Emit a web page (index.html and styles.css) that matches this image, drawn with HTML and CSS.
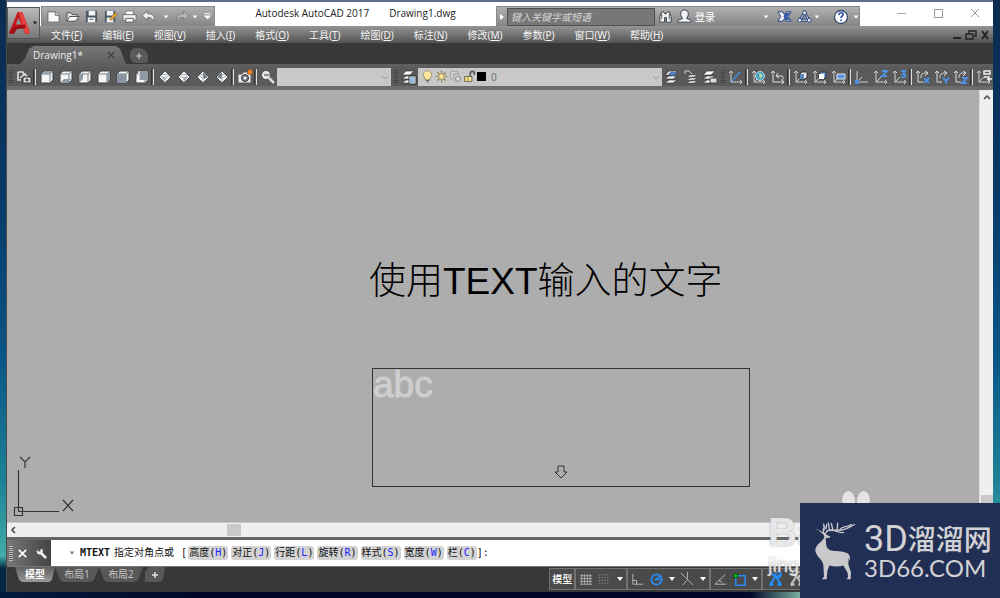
FILE: index.html
```html
<!DOCTYPE html>
<html lang="zh-CN">
<head>
<meta charset="utf-8">
<title>Autodesk AutoCAD 2017 - Drawing1.dwg</title>
<link rel="stylesheet" href="styles.css">
</head>
<body>
<svg class="defs" aria-hidden="true">
  <symbol id="cube" viewBox="0 0 16 16"><path d="M2 5l3-3h9v9l-3 3H2z" fill="#f4f4f4" stroke="#3c4248"/><path d="M2 5h9v9M11 5l3-3" fill="none" stroke="#737c86"/></symbol>
  <symbol id="diamond" viewBox="0 0 16 16"><path d="M8 2l6 6-6 6-6-6z" fill="#f6f6f6" stroke="#454c55"/><path d="M4 7l4 2 4-2M8 9v5M5 5l3 1 3-1" fill="none" stroke="#8a929a" stroke-width=".8"/></symbol>
  <symbol id="layers" viewBox="0 0 16 16"><path d="M1 6l4-4h8l-4 4zM1 10l4-3h8l-4 3zM1 14l4-3h8l-4 3z" fill="#fafafa" stroke="#333" stroke-width=".7"/></symbol>
  <symbol id="axes" viewBox="0 0 16 16"><path d="M3 2v11h11M1 4l2-2 2 2M12 11l2 2-2 2M3 13l5-5" fill="none" stroke="#cfcfcf"/></symbol>
  <symbol id="tri" viewBox="0 0 8 8"><path d="M1 2h6L4 6z" fill="currentColor"/></symbol>
  <symbol id="person" viewBox="0 0 18 18"><path d="M3 15l5-8M15 15L9 5M4 2l6 5 5-4M3 15l4-1M15 15l-4-1" fill="none" stroke="currentColor" stroke-width="2.4"/><circle cx="12" cy="4" r="3" fill="none" stroke="currentColor" stroke-width="1.3"/></symbol>
</svg>

<div class="window">
  <header class="header">
    <button class="app-button" aria-label="应用程序菜单">
      <svg class="app-logo" viewBox="0 0 24 28"><path d="M1 24L10 2h5l8 22-5 1-2-6H9l-3 6z" fill="#c5161d"/><path d="M11 2h4l8 22-5 1z" fill="#e64242"/><path d="M11 8l-3 7h6z" fill="#8d8d8d"/><path d="M1 24l6-7 11-2v4l-9 1-3 5z" fill="#9d0f15"/></svg>
      <svg class="tri"><use href="#tri"/></svg>
    </button>
    <div class="titlebar">
      <div class="quick">
        <button aria-label="新建"><svg viewBox="0 0 16 16"><path d="M2 3h8l4 4v7H2z" fill="#f8f8f8" stroke="#666"/><path d="M10 3v4h4" fill="#ccc" stroke="#777"/></svg></button>
        <button aria-label="打开"><svg viewBox="0 0 16 16"><path d="M2 13V4h4l2 2h5v3" fill="#e2e2e2" stroke="#454b52"/><path d="M2 13l3-5h10l-4 5z" fill="#fafafa" stroke="#454b52"/></svg></button>
        <button aria-label="保存"><svg viewBox="0 0 16 16"><path d="M2 2h12v12H2z" fill="#4d5866"/><path d="M5 2h7v5H5zM4 9h8v5H4z" fill="#f4f4f4"/><path d="M6 11h4" stroke="#555"/></svg></button>
        <button aria-label="另存为"><svg viewBox="0 0 16 16"><path d="M2 2h11v12H2z" fill="#4d5866"/><path d="M4 2h7v5H4zM4 9h7v5H4z" fill="#f4f4f4"/><path d="M7 11l6-7 2 2-6 6z" fill="#f0ad36" stroke="#72511f" stroke-width=".6"/></svg></button>
        <button aria-label="打印"><svg viewBox="0 0 16 16"><path d="M4 2h8v5H4z" fill="#fff" stroke="#777"/><path d="M1 6h14v6H1z" fill="#edf0f2" stroke="#6a6e73"/><path d="M4 10h8v4H4z" fill="#fff" stroke="#555"/></svg></button>
        <button aria-label="放弃"><svg viewBox="0 0 16 16"><path d="M1 7l6-5v3c5 0 8 2 7 8-2-3-3-4-7-4v3z" fill="#ededed" stroke="#5b6066" stroke-width=".8"/></svg></button>
        <svg class="tri small undo-list"><use href="#tri"/></svg>
        <button aria-label="重做"><svg viewBox="0 0 16 16"><path d="M15 7L9 2v3c-5 0-8 2-7 8 2-3 3-4 7-4v3z" fill="#b5b5b5" stroke="#737373" stroke-width=".8"/></svg></button>
        <svg class="tri small"><use href="#tri"/></svg>
        <button aria-label="自定义"><svg viewBox="0 0 16 16"><path d="M5 5h6" stroke="#fff"/><path d="M4 7h8l-4 4z" fill="#fff"/></svg></button>
      </div>
      <h1 class="title"><span>Autodesk AutoCAD 2017</span><span>Drawing1.dwg</span></h1>
      <div class="info">
        <svg class="tri side" viewBox="0 0 8 8"><path d="M2 1l4 3-4 3z" fill="#fff"/></svg>
        <input class="search" type="text" placeholder="键入关键字或短语" aria-label="键入关键字或短语">
        <button aria-label="搜索"><svg viewBox="0 0 16 16"><path d="M2 14V8l2-5h2l1 2h2l1-2h2l2 5v6h-5V9H7v5z" fill="#f3f3f3" stroke="#343b44"/><path d="M4 5v6M12 5v6" stroke="#454c55"/></svg></button>
        <button class="login"><svg viewBox="0 0 16 16"><path d="M8 1c5 0 5 6 2 9l5 2v2H1v-2l5-2C3 7 3 1 8 1z" fill="#f4f4f4" stroke="#39414d"/></svg><span>登录</span></button>
        <svg class="tri small push"><use href="#tri"/></svg>
        <button aria-label="Exchange"><svg viewBox="0 0 16 16"><path d="M1 3h5l2 3 2-3h5l-3 5 3 5h-5l-2-3-2 3H1l3-5z" fill="#e9edf6" stroke="#233e78"/><path d="M9 4h5l-3 4 3 4H9L7 8z" fill="#345ba8"/></svg></button>
        <button aria-label="A360"><svg viewBox="0 0 16 16"><path d="M8 4L3 12h10z" fill="none" stroke="#2c487b" stroke-width="3"/><path d="M8 4L3 12h10z" fill="none" stroke="#e0e8f5"/><g fill="#edf2fa" stroke="#2c487b"><circle cx="8" cy="4" r="2"/><circle cx="3" cy="12" r="2"/><circle cx="13" cy="12" r="2"/></g></svg></button>
        <svg class="tri small"><use href="#tri"/></svg>
        <button class="help" aria-label="帮助"><svg viewBox="0 0 16 16"><circle cx="8" cy="8" r="6.5" fill="#fff" stroke="#37496a" stroke-width="1.3"/><path d="M6 6c0-3 5-3 4 0-.3 1-2 1-2 3M8 10.500v1.500" fill="none" stroke="#2450a8" stroke-width="1.7"/></svg></button>
        <svg class="tri small"><use href="#tri"/></svg>
      </div>
      <div class="controls">
        <button aria-label="最小化"><svg viewBox="0 0 12 12"><path d="M2 5.500h9" stroke="#aaa"/></svg></button>
        <button aria-label="最大化"><svg viewBox="0 0 12 12"><path d="M2.500 1.500h8v8h-8z" fill="none" stroke="#999"/></svg></button>
        <button aria-label="关闭"><svg viewBox="0 0 12 12"><path d="M2 1l8 8M10 1l-8 8" stroke="#999"/></svg></button>
      </div>
    </div>
    <nav class="menubar">
      <button>文件(<u>F</u>)</button><button>编辑(<u>E</u>)</button><button>视图(<u>V</u>)</button><button>插入(<u>I</u>)</button><button>格式(<u>O</u>)</button><button>工具(<u>T</u>)</button><button>绘图(<u>D</u>)</button><button>标注(<u>N</u>)</button><button>修改(<u>M</u>)</button><button>参数(<u>P</u>)</button><button>窗口(<u>W</u>)</button><button>帮助(<u>H</u>)</button>
      <div class="doc-controls">
        <button aria-label="最小化图形"><svg viewBox="0 0 12 12"><path d="M2 9h8" stroke="#222" stroke-width="2"/></svg></button>
        <button aria-label="还原图形"><svg viewBox="0 0 12 12"><path d="M4 4V2h7v5H9M1 5h7v5H1z" fill="none" stroke="#222" stroke-width="1.400"/></svg></button>
        <button aria-label="关闭图形"><svg viewBox="0 0 12 12"><path d="M3 2l6 8M9 2l-6 8" stroke="#222" stroke-width="2"/></svg></button>
      </div>
    </nav>
  </header>

  <div class="file-tabs">
    <div class="file-tab"><span>Drawing1*</span><button aria-label="关闭选项卡"><svg viewBox="0 0 8 8"><path d="M1 1l6 6M7 1L1 7" stroke="#454545" stroke-width="1.500"/></svg></button></div>
    <button class="new-tab" aria-label="新图形"><svg viewBox="0 0 8 8"><path d="M4 1v6M1 4h6" stroke="#ccc" stroke-width="1.200"/></svg></button>
  </div>

  <div class="toolbar">
    <i class="grip"></i>
    <button class="tool" aria-label="命名视图"><svg viewBox="0 0 16 16"><path d="M2 3h5l1 4M2 3v8h3M4 9l5-4 3 4" fill="none" stroke="#ddd" stroke-width="1.600"/><path d="M7 8h8v6H7z" fill="#ddd" stroke="#333"/><circle cx="11" cy="11" r="1.500" fill="#444"/></svg></button>
    <i class="sep"></i>
    <button class="tool" aria-label="俯视"><svg viewBox="0 0 16 16"><use href="#cube"/><path d="M3 5l2-2h8l-2 2z" fill="#9aa4ae"/></svg></button>
    <button class="tool" aria-label="仰视"><svg viewBox="0 0 16 16"><use href="#cube"/><path d="M3 13l3-3h7l-2 3z" fill="#8f9aa6"/></svg></button>
    <button class="tool" aria-label="左视"><svg viewBox="0 0 16 16"><use href="#cube"/><path d="M3 6l3-3v7l-3 3z" fill="#8f9aa6"/></svg></button>
    <button class="tool" aria-label="右视"><svg viewBox="0 0 16 16"><use href="#cube"/><path d="M11 5l3-3v9l-3 3z" fill="#8f9aa6"/></svg></button>
    <button class="tool" aria-label="前视"><svg viewBox="0 0 16 16"><use href="#cube"/><path d="M2 5h9v9H2z" fill="#8995a3"/></svg></button>
    <button class="tool" aria-label="后视"><svg viewBox="0 0 16 16"><use href="#cube"/><path d="M5 3h8v8H5z" fill="#8f9aa6"/><path d="M5 2v9H2" fill="none" stroke="#fff"/></svg></button>
    <i class="sep"></i>
    <button class="tool" aria-label="西南等轴测"><svg viewBox="0 0 16 16"><use href="#diamond"/><path d="M8 9v4L4 8z" fill="#b1b7be"/></svg></button>
    <button class="tool" aria-label="东南等轴测"><svg viewBox="0 0 16 16"><use href="#diamond"/><path d="M8 9l4-1-4 5z" fill="#9da4ad"/></svg></button>
    <button class="tool" aria-label="东北等轴测"><svg viewBox="0 0 16 16"><use href="#diamond"/><path d="M8 3l5 5-4 2-1-3z" fill="#77818d"/></svg></button>
    <button class="tool" aria-label="西北等轴测"><svg viewBox="0 0 16 16"><use href="#diamond"/><path d="M8 3L3 8l4 2 1-3z" fill="#737e8b"/></svg></button>
    <i class="sep"></i>
    <button class="tool" aria-label="创建相机"><svg viewBox="0 0 16 16"><path d="M1 5h4l1-2h4l1 2h3v9H1z" fill="#eee" stroke="#555"/><circle cx="8" cy="9" r="3.500" fill="#78818c" stroke="#333"/><circle cx="8" cy="9" r="1.500" fill="#eee"/><circle cx="13" cy="3" r="2.500" fill="#f27a17"/></svg></button>
    <i class="sep"></i>
    <button class="tool" aria-label="查找"><svg viewBox="0 0 16 16"><circle cx="6" cy="6" r="3.500" fill="#ddd" stroke="#fff"/><path d="M9 9l5 5" stroke="#ddd" stroke-width="2.500"/><path d="M4 6h6" stroke="#444"/></svg></button>
    <div class="combo view-combo"><select aria-label="命名视图列表"><option></option></select><svg class="chev" viewBox="0 0 8 8"><path d="M1 3l3 3 3-3" fill="none" stroke="#999"/></svg></div>
    <i class="grip"></i>
    <button class="tool" aria-label="图层特性"><svg viewBox="0 0 16 16"><use href="#layers"/><path d="M8 7h7v8H8z" fill="#fff" stroke="#333"/><path d="M9 9h5M9 11h5M9 13h5" stroke="#3b74bd"/></svg></button>
    <div class="combo layer-combo">
      <svg viewBox="0 0 16 16"><path d="M5 10C0 4 5 1 8 1s8 4 3 9v2H5z" fill="#ffe9a0" stroke="#8f8460"/><path d="M6 13h4M7 15h2" stroke="#444"/></svg>
      <svg viewBox="0 0 16 16"><circle cx="8" cy="8" r="3.500" fill="#ffe49a" stroke="#85713c"/><path d="M8 1v2M8 13v2M1 8h2M13 8h2M3 3l2 2M11 11l2 2M3 13l2-2M11 5l2-2" stroke="#85713c" stroke-width="1.500"/></svg>
      <svg viewBox="0 0 16 16"><path d="M2 2h9v3H5v6H2zM5 5h7v3" fill="#ddd" stroke="#999"/><circle cx="11" cy="11" r="3" fill="#ddd" stroke="#999" stroke-width="1.500"/></svg>
      <svg viewBox="0 0 16 16"><path d="M9 8V4c0-3 5-3 5 0v2" fill="none" stroke="#555" stroke-width="2"/><path d="M2 8h9v6H2z" fill="#ffe58f" stroke="#53513f"/><path d="M6 9v4" stroke="#75643a"/></svg>
      <i class="swatch"></i>
      <select aria-label="图层"><option>0</option></select><svg class="chev" viewBox="0 0 8 8"><path d="M1 3l3 3 3-3" fill="none" stroke="#999"/></svg>
    </div>
    <button class="tool" aria-label="置为当前"><svg viewBox="0 0 16 16"><use href="#layers"/><path d="M4 5l4-3 5 2-4 3z" fill="#4e7ebd"/></svg></button>
    <button class="tool" aria-label="上一个图层"><svg viewBox="0 0 16 16"><path d="M4 8l3-2h7l-3 2zM4 11l3-2h7l-3 2zM4 14l3-2h7l-3 2z" fill="#fff" stroke="#444" stroke-width=".6"/><path d="M2 5V2h4l3 3" fill="none" stroke="#ccc"/></svg></button>
    <button class="tool" aria-label="图层状态"><svg viewBox="0 0 16 16"><use href="#layers"/><path d="M8 9h7v5H8z" fill="#ddd" stroke="#444"/></svg></button>
    <i class="grip"></i>
    <button class="tool" aria-label="UCS"><svg viewBox="0 0 16 16"><use href="#axes"/><path d="M4 12l8-9" stroke="#458be0" stroke-width="1.500"/></svg></button>
    <i class="sep"></i>
    <button class="tool" aria-label="世界"><svg viewBox="0 0 16 16"><use href="#axes"/><circle cx="9" cy="7" r="4.500" fill="#4f9fc0" stroke="#b8dfec"/><path d="M8 4l4 2-3 4z" fill="#b9dfa8"/></svg></button>
    <button class="tool" aria-label="上一个UCS"><svg viewBox="0 0 16 16"><path d="M3 2v11h11M1 4l2-2 2 2M12 11l2 2-2 2M6 7h5c4 0 2 4 0 4M8 4L6 7l3 2" fill="none" stroke="#ddd"/></svg></button>
    <i class="sep"></i>
    <button class="tool" aria-label="面UCS"><svg viewBox="0 0 16 16"><use href="#axes"/><path d="M7 5l2-2h5v5l-2 2H7z" fill="#eee" stroke="#333"/><path d="M7 5h4v5H7z" fill="#5b87b6"/></svg></button>
    <button class="tool" aria-label="对象UCS"><svg viewBox="0 0 16 16"><use href="#axes"/><path d="M7 5l2-2h5v5l-2 2H7z" fill="#78a6dc" stroke="#333"/><path d="M7 5h5v5H7z" fill="#fff"/></svg></button>
    <button class="tool" aria-label="视图UCS"><svg viewBox="0 0 16 16"><use href="#axes"/><path d="M6 5h8v5H6z" fill="#5b94dc" stroke="#dbe5ef"/></svg></button>
    <i class="sep"></i>
    <button class="tool" aria-label="原点"><svg viewBox="0 0 16 16"><path d="M3 2v11h11M3 13l5-5" fill="none" stroke="#ccc"/><path d="M1 11h4v4H1z" fill="#4e91e4"/></svg></button>
    <button class="tool" aria-label="Z轴矢量"><svg viewBox="0 0 16 16"><use href="#axes"/><path d="M9 2h5L9 7h5" fill="none" stroke="#4e91e4" stroke-width="1.800"/></svg></button>
    <button class="tool" aria-label="三点"><svg viewBox="0 0 16 16"><use href="#axes"/><path d="M9 2h4l-2 3c4 0 3 4-2 3" fill="none" stroke="#4e91e4" stroke-width="1.800"/></svg></button>
    <i class="sep"></i>
    <button class="tool" aria-label="绕X旋转"><svg viewBox="0 0 16 16"><path d="M3 2v11h5M1 4l2-2 2 2M6 9c0-5 2-5 7-5M10 2l3 2-3 3" fill="none" stroke="#ddd"/><path d="M9 9l5 5M14 9l-5 5" stroke="#4e91e4" stroke-width="1.800"/></svg></button>
    <button class="tool" aria-label="绕Y旋转"><svg viewBox="0 0 16 16"><path d="M3 2v11h5M1 4l2-2 2 2M6 9c0-5 2-5 7-5M10 2l3 2-3 3" fill="none" stroke="#ddd"/><path d="M9 9l3 3 3-3M12 12v3" fill="none" stroke="#4e91e4" stroke-width="1.800"/></svg></button>
    <button class="tool" aria-label="绕Z旋转"><svg viewBox="0 0 16 16"><path d="M3 2v11h5M1 4l2-2 2 2M6 9c0-5 2-5 7-5M10 2l3 2-3 3" fill="none" stroke="#ddd"/><path d="M9 9h5l-5 5h5" fill="none" stroke="#4e91e4" stroke-width="1.800"/></svg></button>
    <i class="sep"></i>
    <button class="tool" aria-label="应用UCS"><svg viewBox="0 0 16 16"><use href="#axes"/><path d="M8 2h6v3H8zM8 8h5v4M11 10h5" fill="none" stroke="#eee" stroke-width="1.500"/></svg></button>
  </div>

  <main class="workspace">
    <section class="canvas" aria-label="绘图区">
      <p class="drawn-text">使用TEXT输入的文字</p>
      <div class="text-frame"><span>abc</span><svg class="down-arrow" viewBox="0 0 14 14"><path d="M4 1h6v6h3l-6 6-6-6h3z" fill="none" stroke="#333"/></svg></div>
      <svg class="ucs" viewBox="0 0 64 64"><path d="M6.500 14v41M6 55.500h41M2.500 51.500h8v8h-8zM8 1l5 5 5-5M13 6v6M51 44l10 11M61 44L51 55" fill="none" stroke="#333" stroke-width="1.200"/></svg>
    </section>
    <div class="vscroll"><svg viewBox="0 0 10 10"><path d="M2 7l3-3 3 3" fill="none" stroke="#444" stroke-width="1.500"/></svg><i></i></div>
    <div class="hscroll"><svg viewBox="0 0 10 10"><path d="M7 2L4 5l3 3" fill="none" stroke="#444" stroke-width="1.500"/></svg><i></i></div>
  </main>

  <div class="command">
    <div class="command-tools">
      <i class="dots"></i>
      <button aria-label="关闭命令行"><svg viewBox="0 0 12 12"><path d="M2 2l8 8M10 2l-8 8" stroke="#fff" stroke-width="1.800"/></svg></button>
      <button aria-label="自定义命令行"><svg viewBox="0 0 12 12"><path d="M1 2l2 2 2-1V1c3 0 3 2 2 4l5 5-2 2-5-5C2 8 0 5 1 2z" fill="#eee"/></svg></button>
    </div>
    <div class="command-line">
      <svg class="tri"><use href="#tri"/></svg>
      <b>MTEXT</b><span class="prompt">指定对角点或</span><span class="bracket">[</span>
      <span class="options"><button>高度(<em>H</em>)</button><button>对正(<em>J</em>)</button><button>行距(<em>L</em>)</button><button>旋转(<em>R</em>)</button><button>样式(<em>S</em>)</button><button>宽度(<em>W</em>)</button><button>栏(<em>C</em>)</button></span><span>]:</span>
    </div>
  </div>

  <footer class="footer">
    <div class="layout-tabs">
      <button class="layout active">模型</button><button class="layout">布局1</button><button class="layout">布局2</button><button class="layout add" aria-label="新建布局"><svg viewBox="0 0 8 8"><path d="M4 1v6M1 4h6" stroke="#ddd" stroke-width="1.500"/></svg></button>
    </div>
    <div class="status">
      <div class="group first"><button class="model">模型</button></div>
      <div class="group">
        <button aria-label="栅格"><svg viewBox="0 0 16 16"><path d="M4 2v12M7 2v12M10 2v12M13 2v12M2 4h13M2 7h13M2 10h13M2 13h13" stroke="#bbb" stroke-width=".8"/></svg></button>
        <button aria-label="捕捉"><svg viewBox="0 0 16 16"><path d="M2 3h12M2 6h12M2 9h12M2 12h12" stroke="#aaa" stroke-dasharray="1 2"/></svg></button>
        <svg class="tri"><use href="#tri"/></svg>
      </div>
      <div class="group">
        <button aria-label="正交"><svg viewBox="0 0 16 16"><path d="M3 2v11h11M3 9h4v4" fill="none" stroke="#bbb"/></svg></button>
        <button aria-label="极轴"><svg viewBox="0 0 16 16"><circle cx="8" cy="8" r="5.500" fill="none" stroke="#268cf5" stroke-width="1.800"/><path d="M15 8H7l5-4" fill="none" stroke="#268cf5" stroke-width="1.500"/></svg></button>
        <svg class="tri"><use href="#tri"/></svg>
        <button aria-label="等轴测"><svg viewBox="0 0 16 16"><path d="M1 1l13 13M8 0v7M8 8l-5 6" stroke="#bbb"/></svg></button>
        <svg class="tri"><use href="#tri"/></svg>
      </div>
      <div class="group">
        <button aria-label="对象追踪"><svg viewBox="0 0 16 16"><path d="M14 13H2L13 3M6 9l4 2" fill="none" stroke="#bbb"/></svg></button>
        <button aria-label="对象捕捉"><svg viewBox="0 0 16 16"><path d="M4 4h10v10H4z" fill="none" stroke="#268cf5" stroke-width="1.600"/><path d="M2 2h4v4H2z" fill="#0cce22" stroke="#054d0c"/></svg></button>
        <svg class="tri"><use href="#tri"/></svg>
      </div>
      <div class="group rest">
        <button class="blue" aria-label="注释可见性"><svg viewBox="0 0 18 18"><use href="#person"/></svg></button>
        <button class="gray" aria-label="自动缩放"><svg viewBox="0 0 18 18"><use href="#person"/></svg></button>
      </div>
    </div>
  </footer>
</div>

<div class="watermark"><i class="paw"></i><i class="paw"></i><b>Ba</b><span>jing</span></div>
<aside class="brand">
  <svg class="deer" viewBox="156 153 132 176"><path d="M165 178l13 2 10 6 8 2 5 7 10 3-3 5-11 1 1 10c0 12 2 22 13 26 18 4 34 1 48 8 10 4 12 13 11 24l-4-9c0 9-2 16 0 23l7 20-1 21h-13l5-5-1-14-13-22c-14 4-29 3-42 0l-6 17-2 24h-15l7-7-2-36c-1-11-12-18-19-30-7-11-7-20 3-31 8-9 19-16 19-25-3-9-14-11-18-20z" fill="#c9c9cb"/><path d="M190 187c-1-9 0-13 4-18m4 18c6-12 18-6 30-7 21 2 28-3 56-17M193 178l-2-16m7 14l2-13m8 15l-3-20m14 22l-5-20m17 22l2-23m6 20c9-14 18-6 35-16m-62 18c16-2 24 8 38 6" fill="none" stroke="#c9c9cb" stroke-width="4" stroke-linecap="round"/></svg>
  <div class="brand-text"><strong><span>3D</span>溜溜网</strong><small>3D66.COM</small></div>
</aside>
</body>
</html>
```

FILE: styles.css
```css
* { box-sizing: border-box; }
body {
  margin: 0;
  height: 100vh;
  overflow: hidden;
  display: flex;
  flex-direction: column;
  font: 10px/14px "Noto Sans", "Noto Sans CJK SC", sans-serif;
  background:
    linear-gradient(90deg, #021b3c 0, #000729 20%, #000729 75%, #8fd0b5 81%) bottom / 100% 6px no-repeat,
    linear-gradient(#0c2c50 0, #073765 30%, #0a5687 60%, #1c8196 80%, #42aaa9 93%, #052a46 95%);
}
button, select, input { font: inherit; color: inherit; margin: 0; padding: 0; border: 0; background: none; border-radius: 0; }
button { display: flex; align-items: center; justify-content: center; flex: none; }
svg { display: block; flex: none; }
i { display: block; flex: none; }
.defs { position: absolute; width: 0; height: 0; }
.tri { width: 8px; height: 8px; color: #fff; }
.tri.small { width: 6px; height: 6px; }

.window { flex: 1; min-height: 0; margin: 0 7px 6px 6px; display: flex; flex-direction: column; background: #383838; border-left: 1px solid #4a4a4a; border-top: 2px solid #5b6c88; }

.header { display: grid; grid-template-columns: 34px 1fr; grid-template-rows: 24px 17px; background: linear-gradient(#fff 24px, #959595 24px, #525252); }
.app-button { grid-row: 1 / 3; margin: 5px 1px 4px 0; border: 1px solid #555; background: linear-gradient(#bababa, #777); gap: 1px; justify-content: flex-start; }
.app-logo { width: 23px; height: 27px; }
.app-button .tri { width: 6px; height: 6px; color: #222; }
.titlebar { display: flex; align-items: stretch; }
.quick, .info { margin-top: 4px; display: flex; align-items: center; background: linear-gradient(#b0b0b0, #858585); border: 1px solid #888; border-bottom: 0; }
.quick { padding-left: 2px; width: 174px; }
.quick button { width: 19px; }
.quick button svg { width: 15px; height: 15px; }
.undo-list { margin: 0 4px 0 5px; }
.title { flex: 1; margin: 0; display: flex; justify-content: center; gap: 20px; font: 10px/22px "Open Sans", sans-serif; color: #222; white-space: nowrap; }
.info { width: 364px; }
.info .side { margin: 0 1px; }
.search { width: 148px; height: 18px; padding: 0 3px; background: #777; border: 1px solid #4f4f4f; color: #ddd; font-style: italic; }
.search::placeholder { color: #d6d6d6; opacity: 1; }
.info button { width: 20px; }
.info button svg { width: 15px; height: 15px; }
.info .login { width: 42px; gap: 3px; color: #fff; }
.info .push { margin-left: auto; margin-right: 5px; }
.info .help { margin: 0 2px 0 11px; }
.info .help svg { width: 16px; height: 16px; }
.controls { display: flex; width: 133px; padding-left: 22px; }
.controls button { width: 37px; }
.controls svg { width: 12px; height: 12px; }
.menubar { display: flex; align-items: center; gap: 20px; padding-left: 10px; color: #f3f3f3; }
.doc-controls { display: flex; gap: 2px; margin-left: auto; padding-right: 2px; }
.doc-controls svg { width: 12px; height: 12px; }

.file-tabs { display: flex; align-items: flex-end; gap: 4px; height: 21px; padding-left: 13px; color: #eee; }
.file-tab { display: flex; align-items: center; justify-content: space-between; width: 106px; height: 18px; padding: 0 11px 0 13px; font: 10px/18px "Open Sans", sans-serif; background: linear-gradient(#777, #5e5e5e); clip-path: polygon(0 100%, 5px 70%, 9px 15%, 14px 0, 96px 0, 100px 15%, 106px 100%); }
.file-tab svg, .new-tab svg { width: 8px; height: 8px; }
.new-tab { width: 18px; height: 15px; margin-bottom: 1px; background: #5a5a5a; border-radius: 6px 9px 3px 6px; }

.toolbar { display: flex; align-items: center; height: 26px; background: #5a5a5a; border-top: 3px solid #5e5e5e; border-bottom: 4px solid #6c6c6c; overflow: hidden; }
.tool { width: 19px; height: 19px; }
.tool svg { width: 16px; height: 16px; }
.sep { width: 4px; height: 16px; border-left: 1px solid #333; background: linear-gradient(#ddd, #ddd) 1px 0 / 1px 100% no-repeat; }
.grip { width: 7px; height: 14px; background: repeating-linear-gradient(#444 0 1px, #5a5a5a 1px 2px) 2px 0 / 4px 100% no-repeat; }
.combo { display: flex; align-items: center; height: 18px; background: #c8c8c8; color: #777; }
.combo select { flex: 1; min-width: 0; align-self: stretch; appearance: none; padding-left: 4px; }
.view-combo { width: 114px; margin-right: 1px; }
.layer-combo { flex: 0 0 244px; padding-left: 3px; gap: 1px; }
.combo svg { width: 13px; height: 13px; }
.combo .chev { width: 8px; height: 8px; margin: 0 2px; }
.swatch { width: 9px; height: 9px; background: #000; }

.workspace { flex: 1; min-height: 0; display: grid; grid-template: 1fr 14px / 1fr 14px; background: #efefef; border-bottom: 3px solid #666; }
.canvas { position: relative; background: #adadad; overflow: hidden; border-bottom: 1px solid #c6c6c6; }
.drawn-text { position: absolute; left: 362px; top: 168px; margin: 0; font: 300 37px/48px "Liberation Sans", "Noto Sans CJK SC", sans-serif; color: #000; white-space: nowrap; }
.text-frame { position: absolute; left: 365px; top: 278px; width: 378px; height: 119px; border: 1px solid #333; display: flex; flex-direction: column; align-items: center; justify-content: space-between; padding-bottom: 7px; }
.text-frame span { align-self: flex-start; font: 37px/31px "Liberation Sans", sans-serif; color: #cecece; -webkit-text-stroke: 1px #cecece; }
.down-arrow { width: 14px; height: 14px; }
.ucs { position: absolute; left: 5px; bottom: 2px; width: 64px; height: 64px; }
.vscroll { grid-row: 1 / 3; grid-column: 2; display: flex; flex-direction: column; align-items: center; justify-content: space-between; padding: 2px 0 14px 1px; border-left: 1px solid #ddd; }
.vscroll svg, .hscroll svg { width: 10px; height: 10px; }
.vscroll i { width: 12px; height: 28px; background: #c9c9c9; }
.hscroll { grid-row: 2; grid-column: 1; display: flex; align-items: center; gap: 209px; padding-left: 1px; }
.hscroll i { width: 14px; height: 12px; background: #cacaca; }

.command { display: flex; height: 27px; background: #fff; border-bottom: 1px solid #777; }
.command-tools { display: flex; align-items: center; gap: 7px; width: 44px; padding-left: 2px; background: linear-gradient(90deg, #777, #444); }
.command-tools svg { width: 11px; height: 11px; }
.command-tools button + button { margin-left: 1px; }
.command-tools .dots { width: 4px; height: 15px; margin-right: -3px; background: repeating-linear-gradient(#bbb 0 1px, #666 1px 2px); }
.command-line { display: flex; align-items: center; padding-left: 18px; font: 10px/14px "DejaVu Sans Mono", "Noto Sans CJK SC", monospace; color: #111; white-space: nowrap; }
.command-line .tri { color: #777; width: 6px; height: 6px; margin-right: 5px; }
.prompt { margin: 0 7px 0 4px; }
.bracket { margin-right: 1px; }
.options { display: flex; gap: 3px; }
.options button { padding: 0 1px; background: #d3d3d3; border-radius: 3px; }
.options em { font-style: normal; color: #22f; }

.footer { display: grid; grid-template-columns: 55fr 45fr; height: 25px; }
.layout-tabs { display: flex; align-items: flex-start; padding-left: 8px; }
.layout { width: 44px; height: 15px; line-height: 15px; color: #c4c4c4; background: #585858; clip-path: polygon(0 0, 100% 0, 39px 85%, 36px 100%, 8px 100%, 5px 85%); }
.layout.active { width: 40px; color: #fff; font-weight: 700; background: linear-gradient(#606060, #999); clip-path: polygon(0 0, 100% 0, 37px 85%, 34px 100%, 7px 100%, 4px 85%); }
.layout.add { width: 20px; margin-left: 2px; clip-path: polygon(0 30%, 4px 0, 100% 0, 18px 85%, 14px 100%, 0 100%); }
.layout svg { width: 8px; height: 8px; }
.status { display: flex; height: 22px; margin-top: 1px; color: #fff; background: #4a4a4a; }
.group { display: flex; align-items: center; gap: 4px; padding: 0 2px; border: 1px solid #727272; }
.group.first { padding: 0 2px; }
.group svg { width: 15px; height: 15px; }
.group .tri { width: 8px; height: 8px; }
.model { font-weight: 500; }
.rest { flex: 1; padding-left: 4px; }
.rest svg { width: 17px; height: 17px; }
.blue { color: #268cf5; }
.gray { color: #bbb; }

.watermark { position: absolute; right: 129px; bottom: 16px; width: 103px; height: 91px; display: grid; grid-template: 18px 44px 29px / 87px 16px; color: rgb(255 255 255 / 75%); font-family: "Liberation Sans", sans-serif; text-shadow: 0 0 2px #999; }
.watermark b { grid-area: 2 / 1; font-size: 40px; line-height: 46px; }
.watermark span { grid-area: 3 / 1; font-size: 20px; line-height: 24px; }
.paw { width: 13px; height: 20px; border-radius: 50%; background: #e4e4e4; justify-self: end; }
.paw + .paw { margin-left: 2px; justify-self: start; }
.brand { position: absolute; right: 0; bottom: 0; width: 200px; height: 95px; display: flex; align-items: center; gap: 8px; padding-left: 12px; background: #222f55; color: #d2d2d4; }
.deer { width: 44px; height: 59px; }
.brand-text { display: flex; flex-direction: column; font-family: Lato, "Noto Sans CJK SC", sans-serif; white-space: nowrap; }
.brand-text strong { display: flex; align-items: center; font-size: 28px; line-height: 34px; font-weight: 500; }
.brand-text strong span { font: 36px/34px Roboto, sans-serif; }
.brand-text small { font-size: 24px; line-height: 24px; }
```
